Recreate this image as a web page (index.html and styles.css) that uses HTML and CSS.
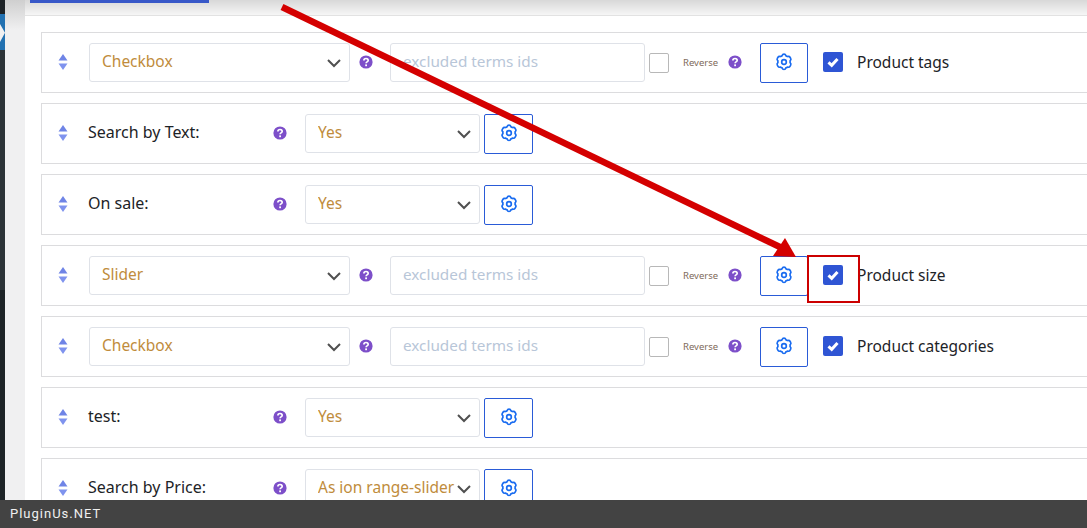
FILE: index.html
```html
<!DOCTYPE html>
<html lang="en">
<head>
  <meta charset="UTF-8" />
  <title>Filter items</title>
  <link rel="stylesheet" href="styles.css">
</head>
<body>
  <svg width="0" height="0" class="defs">
    <symbol id="sort" viewBox="0 0 12 18">
      <path d="M6 1 L10.500 7.500 H1.500 Z" fill="#6f84e6"/>
      <path d="M6 17 L10.500 10.500 H1.500 Z" fill="#7f93ee"/>
    </symbol>
    <symbol id="help" viewBox="0 0 14 14">
      <circle cx="7" cy="7" r="6.6" fill="#7d4fc9"/>
      <path d="M4.900 5.400 C4.900 2.900 9.200 2.900 9.200 5.300 C9.200 6.900 7.100 6.800 7.100 8.200" fill="none" stroke="#fff" stroke-width="1.700"/>
      <rect x="6.200" y="9.400" width="1.800" height="1.800" fill="#fff"/>
    </symbol>
    <symbol id="gear" viewBox="0 0 24 24">
      <path d="M12 2.500c1.200 0 2 .9 2.400 2.100.8.2 1.100.4 1.800.8 1.200-.4 2.400-.2 3 .9l.8 1.400c.6 1 .2 2.200-.7 3 .1.900.1 1.300 0 2.100.9.800 1.300 2 .7 3l-.8 1.400c-.6 1.100-1.800 1.300-3 .9-.7.400-1 .6-1.800.8-.4 1.200-1.200 2.100-2.400 2.100s-2-.9-2.400-2.100c-.8-.2-1.100-.4-1.800-.8-1.200.4-2.400.2-3-.9l-.8-1.400c-.6-1-.2-2.200.7-3-.1-.8-.1-1.200 0-2.100-.9-.8-1.300-2-.7-3l.8-1.400c.6-1.100 1.800-1.300 3-.9.7-.4 1-.6 1.800-.8C10 3.400 10.800 2.500 12 2.500z" fill="none" stroke="#1a6cf0" stroke-width="2"/>
      <circle cx="12" cy="12" r="2.800" fill="none" stroke="#1a6cf0" stroke-width="2"/>
    </symbol>
    <symbol id="tick" viewBox="0 0 20 20">
      <path d="M5.500 10.300 L8.700 13.300 L14.500 7" fill="none" stroke="#fff" stroke-width="3"/>
    </symbol>
  </svg>

  <div class="sidebar">
    <div class="sidebar-tab"></div>
  </div>

  <div class="content">
    <div class="topbar"><div class="topbar-tab"></div></div>

    <div class="rows">
      <div class="row">
        <svg class="sort"><use href="#sort"/></svg>
        <select class="select select-wide"><option>Checkbox</option></select>
        <svg class="help help-tight"><use href="#help"/></svg>
        <input class="terms" type="text" placeholder="excluded terms ids" />
        <span class="box"></span>
        <span class="reverse">Reverse</span>
        <svg class="help"><use href="#help"/></svg>
        <button class="gear gear-term"><svg><use href="#gear"/></svg></button>
        <span class="check"><svg><use href="#tick"/></svg></span>
        <span class="name">Product tags</span>
      </div>

      <div class="row">
        <svg class="sort"><use href="#sort"/></svg>
        <span class="title">Search by Text:</span>
        <svg class="help"><use href="#help"/></svg>
        <select class="select select-small"><option>Yes</option></select>
        <button class="gear"><svg><use href="#gear"/></svg></button>
      </div>

      <div class="row">
        <svg class="sort"><use href="#sort"/></svg>
        <span class="title">On sale:</span>
        <svg class="help"><use href="#help"/></svg>
        <select class="select select-small"><option>Yes</option></select>
        <button class="gear"><svg><use href="#gear"/></svg></button>
      </div>

      <div class="row">
        <svg class="sort"><use href="#sort"/></svg>
        <select class="select select-wide"><option>Slider</option></select>
        <svg class="help help-tight"><use href="#help"/></svg>
        <input class="terms" type="text" placeholder="excluded terms ids" />
        <span class="box"></span>
        <span class="reverse">Reverse</span>
        <svg class="help"><use href="#help"/></svg>
        <button class="gear gear-term"><svg><use href="#gear"/></svg></button>
        <span class="check"><svg><use href="#tick"/></svg></span>
        <span class="name">Product size</span>
      </div>

      <div class="row">
        <svg class="sort"><use href="#sort"/></svg>
        <select class="select select-wide"><option>Checkbox</option></select>
        <svg class="help help-tight"><use href="#help"/></svg>
        <input class="terms" type="text" placeholder="excluded terms ids" />
        <span class="box"></span>
        <span class="reverse">Reverse</span>
        <svg class="help"><use href="#help"/></svg>
        <button class="gear gear-term"><svg><use href="#gear"/></svg></button>
        <span class="check"><svg><use href="#tick"/></svg></span>
        <span class="name">Product categories</span>
      </div>

      <div class="row">
        <svg class="sort"><use href="#sort"/></svg>
        <span class="title">test:</span>
        <svg class="help"><use href="#help"/></svg>
        <select class="select select-small"><option>Yes</option></select>
        <button class="gear"><svg><use href="#gear"/></svg></button>
      </div>

      <div class="row">
        <svg class="sort"><use href="#sort"/></svg>
        <span class="title">Search by Price:</span>
        <svg class="help"><use href="#help"/></svg>
        <select class="select select-small select-long"><option>As ion range-slider</option></select>
        <button class="gear"><svg><use href="#gear"/></svg></button>
      </div>
    </div>
  </div>

  <!-- annotation drawn over the screenshot -->
  <svg class="arrow" viewBox="0 0 1087 528">
    <path d="M282 7 L782 248" stroke="#d40000" stroke-width="6.500" fill="none"/>
    <path d="M796 257 L773 256 L785 238 Z" fill="#d40000"/>
  </svg>
  <div class="redbox"></div>

  <div class="footer">PluginUs.NET</div>
</body>
</html>
```

FILE: styles.css
```css
html, body {
  height: 100%;
}
body {
  margin: 0;
  display: flex;
  overflow: hidden;
  background: linear-gradient(#cfcfcf, #f0f0f1 30px);
  font-family: 'Noto Sans', sans-serif;
  color: #1d2327;
}
.defs {
  position: absolute;
}
.sidebar {
  width: 5px;
  flex-shrink: 0;
  padding-top: 14px;
  background: linear-gradient(#1d2327 50px, #2c3338 50px, #2c3338 290px, #1d2327 290px);
}
.sidebar-tab {
  height: 36px;
  background: #f0f0f1;
}
.sidebar-tab::before {
  content: "";
  display: block;
  height: 100%;
  background: #2271b1;
  clip-path: polygon(0 0, 100% 0, 100% 100%, 0 100%, 0 78%, 100% 52%, 0 28%);
}
.content {
  flex: 1;
  min-width: 0;
  margin-left: 20px;
  background: #fff;
}
.topbar {
  height: 15px;
  padding-left: 5px;
  border-bottom: 1px solid #e2e2e2;
  background: linear-gradient(#d8d8d8, #f6f6f6);
}
.topbar-tab {
  width: 179px;
  height: 3px;
  background: #3858c8;
}
.rows {
  display: flex;
  flex-direction: column;
  gap: 10px;
  width: 1100px;
  padding: 16px 0 0 16px;
}
.row {
  display: flex;
  align-items: center;
  height: 59px;
  flex-shrink: 0;
  padding-left: 15px;
  border: 1px solid #dcdcde;
}
.sort {
  width: 12px;
  height: 18px;
  margin: 0 20px 2px 0;
}
.select {
  appearance: none;
  height: 39px;
  padding: 0 12px 4px;
  border: 1px solid #dfe2e8;
  border-radius: 3px;
  background: #fff url("data:image/svg+xml,%3Csvg xmlns='http://www.w3.org/2000/svg' width='16' height='10'%3E%3Cpath d='M2 2l6 6 6-6' fill='none' stroke='%23505050' stroke-width='2'/%3E%3C/svg%3E") no-repeat right 7px center;
  font-family: inherit;
  font-size: 15.500px;
  color: #c08c3c;
}
.select-wide {
  width: 261px;
}
.select-small {
  width: 175px;
}
.select-long {
  padding-right: 0;
}
.help {
  width: 14px;
  height: 14px;
  flex-shrink: 0;
  margin-bottom: 2px;
}
.help-tight {
  margin: 0 17px 2px 9px;
}
.title {
  width: 185px;
  margin-left: -1px;
  padding-bottom: 4px;
  font-size: 16px;
}
.title + .help {
  margin-right: 18px;
}
.terms {
  width: 255px;
  height: 39px;
  box-sizing: border-box;
  padding: 0 12px 4px;
  border: 1px solid #dfe2e8;
  border-radius: 3px;
  font-family: inherit;
  font-size: 15.300px;
}
.terms::placeholder {
  color: #b8c6d8;
}
.box {
  width: 18px;
  height: 18px;
  margin-left: 4px;
  border: 1px solid #b8b8b8;
  border-radius: 2px;
}
.reverse {
  width: 45px;
  margin-left: 14px;
  font-size: 9.500px;
  color: #806a5a;
}
.gear {
  display: flex;
  align-items: center;
  justify-content: center;
  width: 49px;
  height: 40px;
  margin-left: 4px;
  padding: 0 0 2px;
  border: 1px solid #2a5bd7;
  border-radius: 2px;
  background: #fff;
}
.gear svg {
  width: 20px;
  height: 20px;
}
.gear-term {
  width: 48px;
  margin-left: 18px;
}
.check {
  display: flex;
  width: 20px;
  height: 20px;
  margin-left: 15px;
  margin-bottom: 1px;
  border-radius: 2px;
  background: #2f55d4;
}
.check svg {
  width: 20px;
  height: 20px;
}
.name {
  margin-left: 14px;
  padding-bottom: 2px;
  font-size: 15.500px;
}
.arrow {
  position: fixed;
  top: 0;
  left: 0;
  width: 1087px;
  height: 528px;
  pointer-events: none;
}
.redbox {
  position: fixed;
  top: 255px;
  left: 807px;
  width: 49px;
  height: 44px;
  border: 2px solid #cc0000;
}
.footer {
  position: fixed;
  left: 0;
  right: 0;
  bottom: 0;
  height: 28px;
  padding-left: 10px;
  background: #434343;
  font-family: Roboto, sans-serif;
  font-size: 13px;
  letter-spacing: 1px;
  line-height: 28px;
  color: #f0f0f0;
}
```
